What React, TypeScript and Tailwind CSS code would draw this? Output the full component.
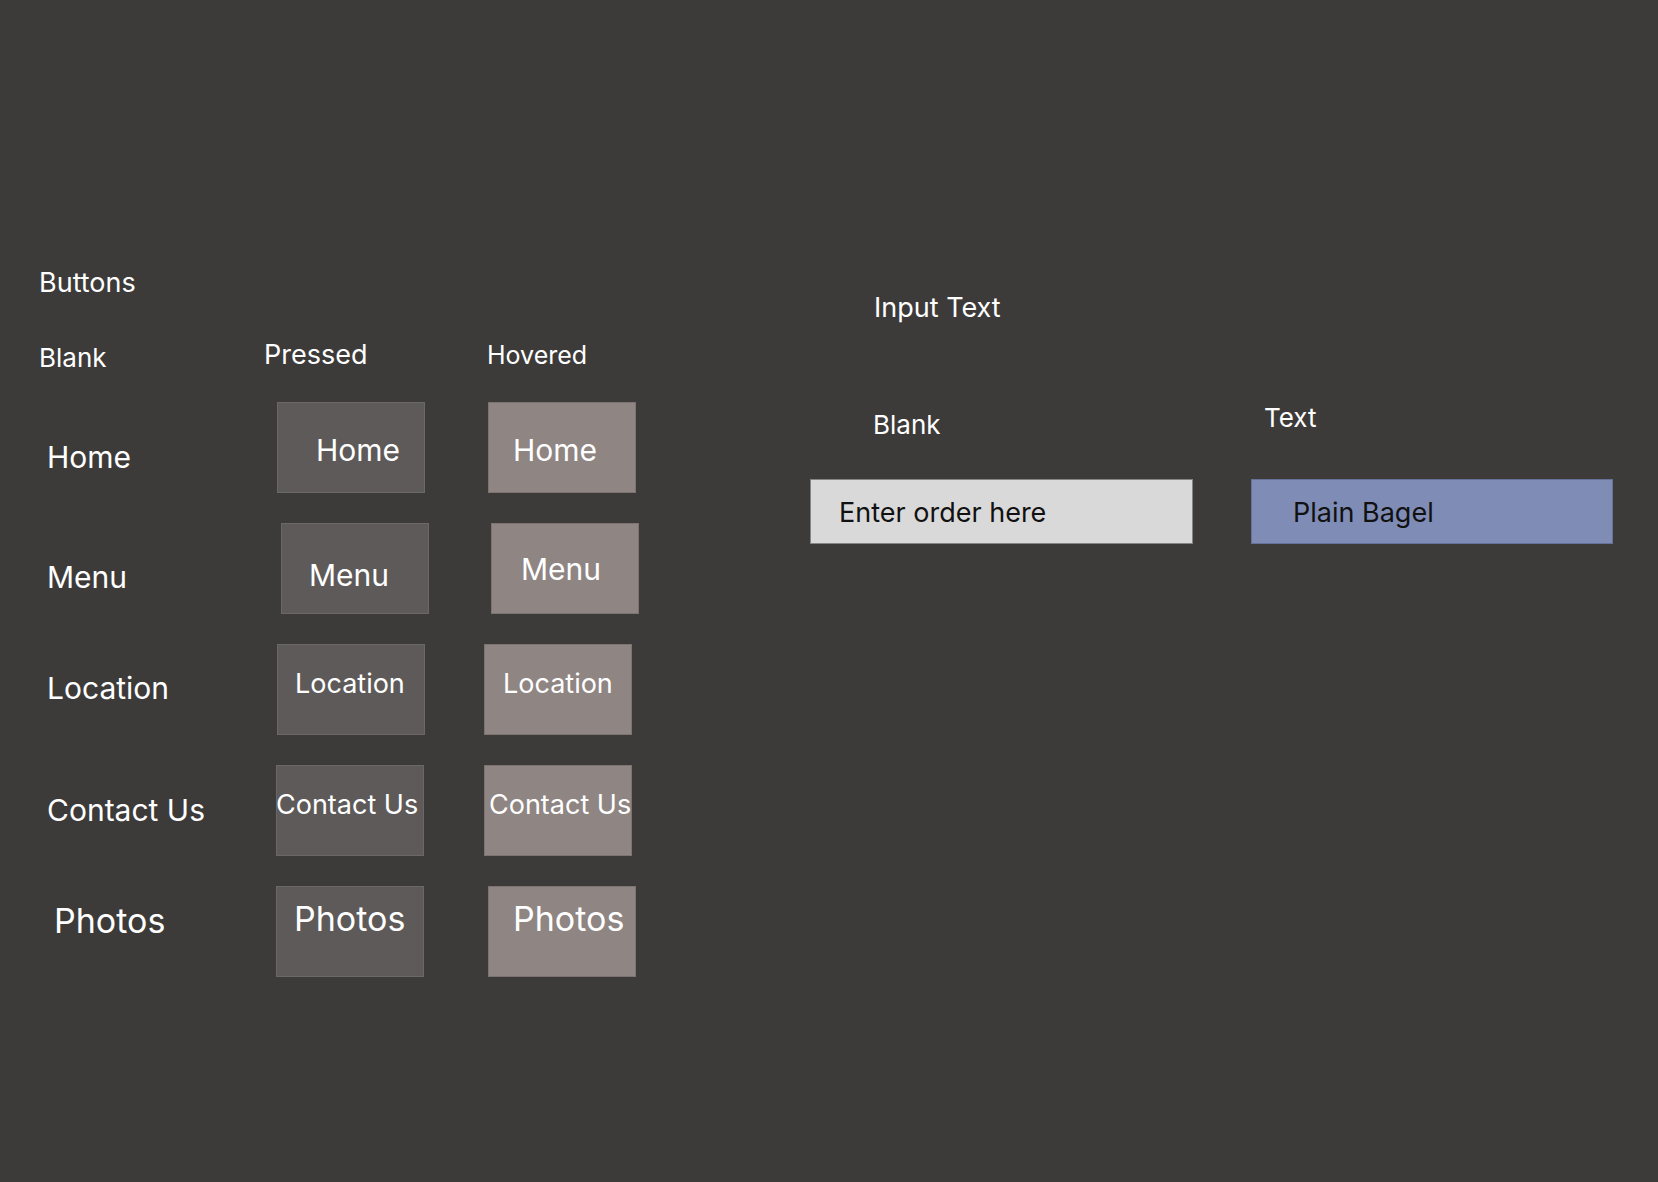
import React from "react";

type Row = {
  label: string;
  labelCell: string;
  labelText: string;
  pressed: string;
  pressedText: string;
  hovered: string;
  hoveredText: string;
};

const rows: Row[] = [
  {
    label: "Home",
    labelCell: "w-[238px] shrink-0 pl-[8px] pt-[40px]",
    labelText: "text-[30px]",
    pressed: "pl-[38px] pt-[32px]",
    pressedText: "text-[30px]",
    hovered: "ml-[63px] pl-[24px] pt-[32px]",
    hoveredText: "text-[30px]",
  },
  {
    label: "Menu",
    labelCell: "w-[242px] shrink-0 pl-[8px] pt-[39px]",
    labelText: "text-[30px]",
    pressed: "pl-[27px] pt-[36px]",
    pressedText: "text-[30px]",
    hovered: "ml-[62px] pl-[29px] pt-[30px]",
    hoveredText: "text-[30px]",
  },
  {
    label: "Location",
    labelCell: "w-[238px] shrink-0 pl-[8px] pt-[29px]",
    labelText: "text-[30px]",
    pressed: "pl-[17px] pt-[25px]",
    pressedText: "text-[27px]",
    hovered: "ml-[59px] pl-[18px] pt-[25px]",
    hoveredText: "text-[27px]",
  },
  {
    label: "Contact Us",
    labelCell: "w-[237px] shrink-0 pl-[8px] pt-[30px]",
    labelText: "text-[30px]",
    pressed: "pl-0 pt-[25px]",
    pressedText: "text-[27px] ml-[-1px]",
    hovered: "ml-[60px] pl-[4px] pt-[25px]",
    hoveredText: "text-[27px]",
  },
  {
    label: "Photos",
    labelCell: "w-[237px] shrink-0 pl-[15px] pt-[18px]",
    labelText: "text-[34px]",
    pressed: "pl-[17px] pt-[15px]",
    pressedText: "text-[34px]",
    hovered: "ml-[64px] pl-[24px] pt-[15px]",
    hoveredText: "text-[34px]",
  },
];

export default function App() {
  return (
    <div className="flex w-[1658px] h-[1182px] overflow-hidden bg-[#3d3b39] text-white font-['Inter',sans-serif] leading-none">
      {/* Buttons section */}
      <div className="w-[810px] shrink-0 pl-[39px] pt-[269px] flex flex-col">
        <div className="text-[27px] h-[26px] leading-none">Buttons</div>
        <div className="mt-[46px] flex h-[30px] items-start">
          <div className="w-[225px] shrink-0 pt-[4px] text-[26px]">Blank</div>
          <div className="w-[223px] shrink-0 text-[27px]">Pressed</div>
          <div className="pt-[2px] text-[25px]">Hovered</div>
        </div>
        <div className="mt-[31px] flex flex-col gap-[30px]">
          {rows.map((r) => (
            <div key={r.label} className="flex h-[91px] items-start">
              <div className={r.labelCell}>
                <span className={`${r.labelText} whitespace-nowrap`}>{r.label}</span>
              </div>
              <div
                className={`w-[148px] h-[91px] shrink-0 bg-[#5e5a59] border border-[#6c6766] whitespace-nowrap ${r.pressed}`}
              >
                <span className={`inline-block ${r.pressedText}`}>{r.label}</span>
              </div>
              <div
                className={`w-[148px] h-[91px] shrink-0 bg-[#8f8583] border border-[#7d7472] whitespace-nowrap ${r.hovered}`}
              >
                <span className={r.hoveredText}>{r.label}</span>
              </div>
            </div>
          ))}
        </div>
      </div>

      {/* Input text section */}
      <div className="flex flex-col pt-[294px]">
        <div className="ml-[64px] text-[27px] h-[26px]">Input Text</div>
        <div className="mt-[85px] flex">
          <div className="w-[441px] shrink-0 flex flex-col">
            <div className="ml-[63px] mt-[7px] text-[26px] h-[26px]">Blank</div>
            <div className="mt-[41px] w-[383px] h-[65px] bg-[#d9d9d9] border border-[#858585] pl-[28px] pt-[19px] text-[27px] text-[#111111] whitespace-nowrap">
              Enter order here
            </div>
          </div>
          <div className="flex flex-col">
            <div className="ml-[13px] text-[26px] h-[26px]">Text</div>
            <div className="mt-[48px] w-[362px] h-[65px] bg-[#7f8cb6] border border-[#66729a] pl-[41px] pt-[19px] text-[27px] text-[#111111] whitespace-nowrap">
              Plain Bagel
            </div>
          </div>
        </div>
      </div>
    </div>
  );
}
